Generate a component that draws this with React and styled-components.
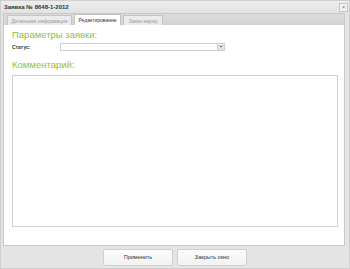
import React from "react";
import styled, { createGlobalStyle } from "styled-components";

const GlobalStyle = createGlobalStyle`
  html, body { margin: 0; padding: 0; }
  body { font-family: "Liberation Sans", Arial, sans-serif; background: #fff; }
`;

const Window = styled.div`
  width: 350px;
  height: 269px;
  background: #e4e4e4;
  display: flex;
  flex-direction: column;
  box-sizing: border-box;
  border: 1px solid #cfcfcf;
`;

const TitleBar = styled.div`
  height: 12px;
  display: flex;
  align-items: center;
  justify-content: space-between;
  padding: 0 1px 0 3px;
  background: linear-gradient(#ededed, #e2e2e2);
`;

const Title = styled.div`
  font-size: 6px;
  font-weight: bold;
  color: #333;
`;

const CloseBtn = styled.div`
  width: 7px;
  height: 7px;
  border: 1px solid #c4c4c4;
  background: #f2f2f2;
  display: flex;
  align-items: center;
  justify-content: center;
  font-size: 6px;
  line-height: 1;
  color: #777;
`;

const Body = styled.div`
  flex: 1;
  margin: 0 4px 0 2px;
  display: flex;
  flex-direction: column;
  min-height: 0;
`;

const TabStrip = styled.div`
  height: 11px;
  display: flex;
  align-items: flex-end;
  gap: 2px;
  padding-left: 3px;
  background: linear-gradient(#dcdcdc, #d2d2d2);
  border: 1px solid #c8c8c8;
  border-bottom: none;
`;

const Tab = styled.div`
  height: ${(p) => (p.$active ? "11px" : "10px")};
  width: ${(p) => p.$w}px;
  box-sizing: border-box;
  display: flex;
  align-items: center;
  justify-content: center;
  font-size: 5px;
  color: ${(p) => (p.$active ? "#333" : "#9a9a9a")};
  background: ${(p) => (p.$active ? "#fff" : "#ebebeb")};
  border: 1px solid #c4c4c4;
  border-bottom: none;
  white-space: nowrap;
`;

const Panel = styled.div`
  flex: 1;
  background: #fff;
  border: 1px solid #c8c8c8;
  border-top: none;
  padding: 5px 6px 18px 8px;
  display: flex;
  flex-direction: column;
`;

const Heading = styled.div`
  font-size: 9.5px;
  line-height: 10px;
  color: #8dbf45;
  margin-bottom: ${(p) => p.$mb}px;
`;

const FieldRow = styled.div`
  display: flex;
  align-items: center;
  height: 9px;
  margin-bottom: 9px;
`;

const Label = styled.div`
  width: 48px;
  font-size: 5px;
  font-weight: bold;
  color: #333;
`;

const Select = styled.div`
  width: 165px;
  height: 8px;
  box-sizing: border-box;
  border: 1px solid #cfcfcf;
  display: flex;
  justify-content: flex-end;
`;

const Arrow = styled.div`
  width: 8px;
  height: 8px;
  margin: -1px -1px 0 0;
  background: linear-gradient(#f0f0f0, #dedede);
  border: 1px solid #cfcfcf;
  box-sizing: border-box;
  display: flex;
  align-items: center;
  justify-content: center;
`;

const TextArea = styled.div`
  flex: 1;
  margin-top: -3px;
  border: 1px solid #d0d0d0;
`;

const Footer = styled.div`
  height: 22px;
  display: flex;
  justify-content: center;
  align-items: center;
  gap: 4px;
`;

const Button = styled.div`
  width: 70px;
  height: 17px;
  box-sizing: border-box;
  border: 1px solid #cfcfcf;
  border-radius: 2px;
  background: linear-gradient(#fdfdfd, #f1f1f1);
  display: flex;
  align-items: center;
  justify-content: center;
  font-size: 5.5px;
  color: #333;
`;

export default function App() {
  return (
    <>
      <GlobalStyle />
      <Window>
        <TitleBar>
          <Title>Заявка № 8648-1-2012</Title>
          <CloseBtn>×</CloseBtn>
        </TitleBar>
        <Body>
          <TabStrip>
            <Tab $w={65}>Детальная информация</Tab>
            <Tab $w={47} $active>Редактирование</Tab>
            <Tab $w={40}>Заказ-наряд</Tab>
          </TabStrip>
          <Panel>
            <Heading $mb={2}>Параметры заявки:</Heading>
            <FieldRow>
              <Label>Статус:</Label>
              <Select>
                <Arrow>
                  <svg width="4" height="3" viewBox="0 0 4 3">
                    <path d="M0.5 0.5 L2 2.2 L3.5 0.5" fill="none" stroke="#555" strokeWidth="0.9" />
                  </svg>
                </Arrow>
              </Select>
            </FieldRow>
            <Heading $mb={8}>Комментарий:</Heading>
            <TextArea />
          </Panel>
        </Body>
        <Footer>
          <Button>Применить</Button>
          <Button>Закрыть окно</Button>
        </Footer>
      </Window>
    </>
  );
}
